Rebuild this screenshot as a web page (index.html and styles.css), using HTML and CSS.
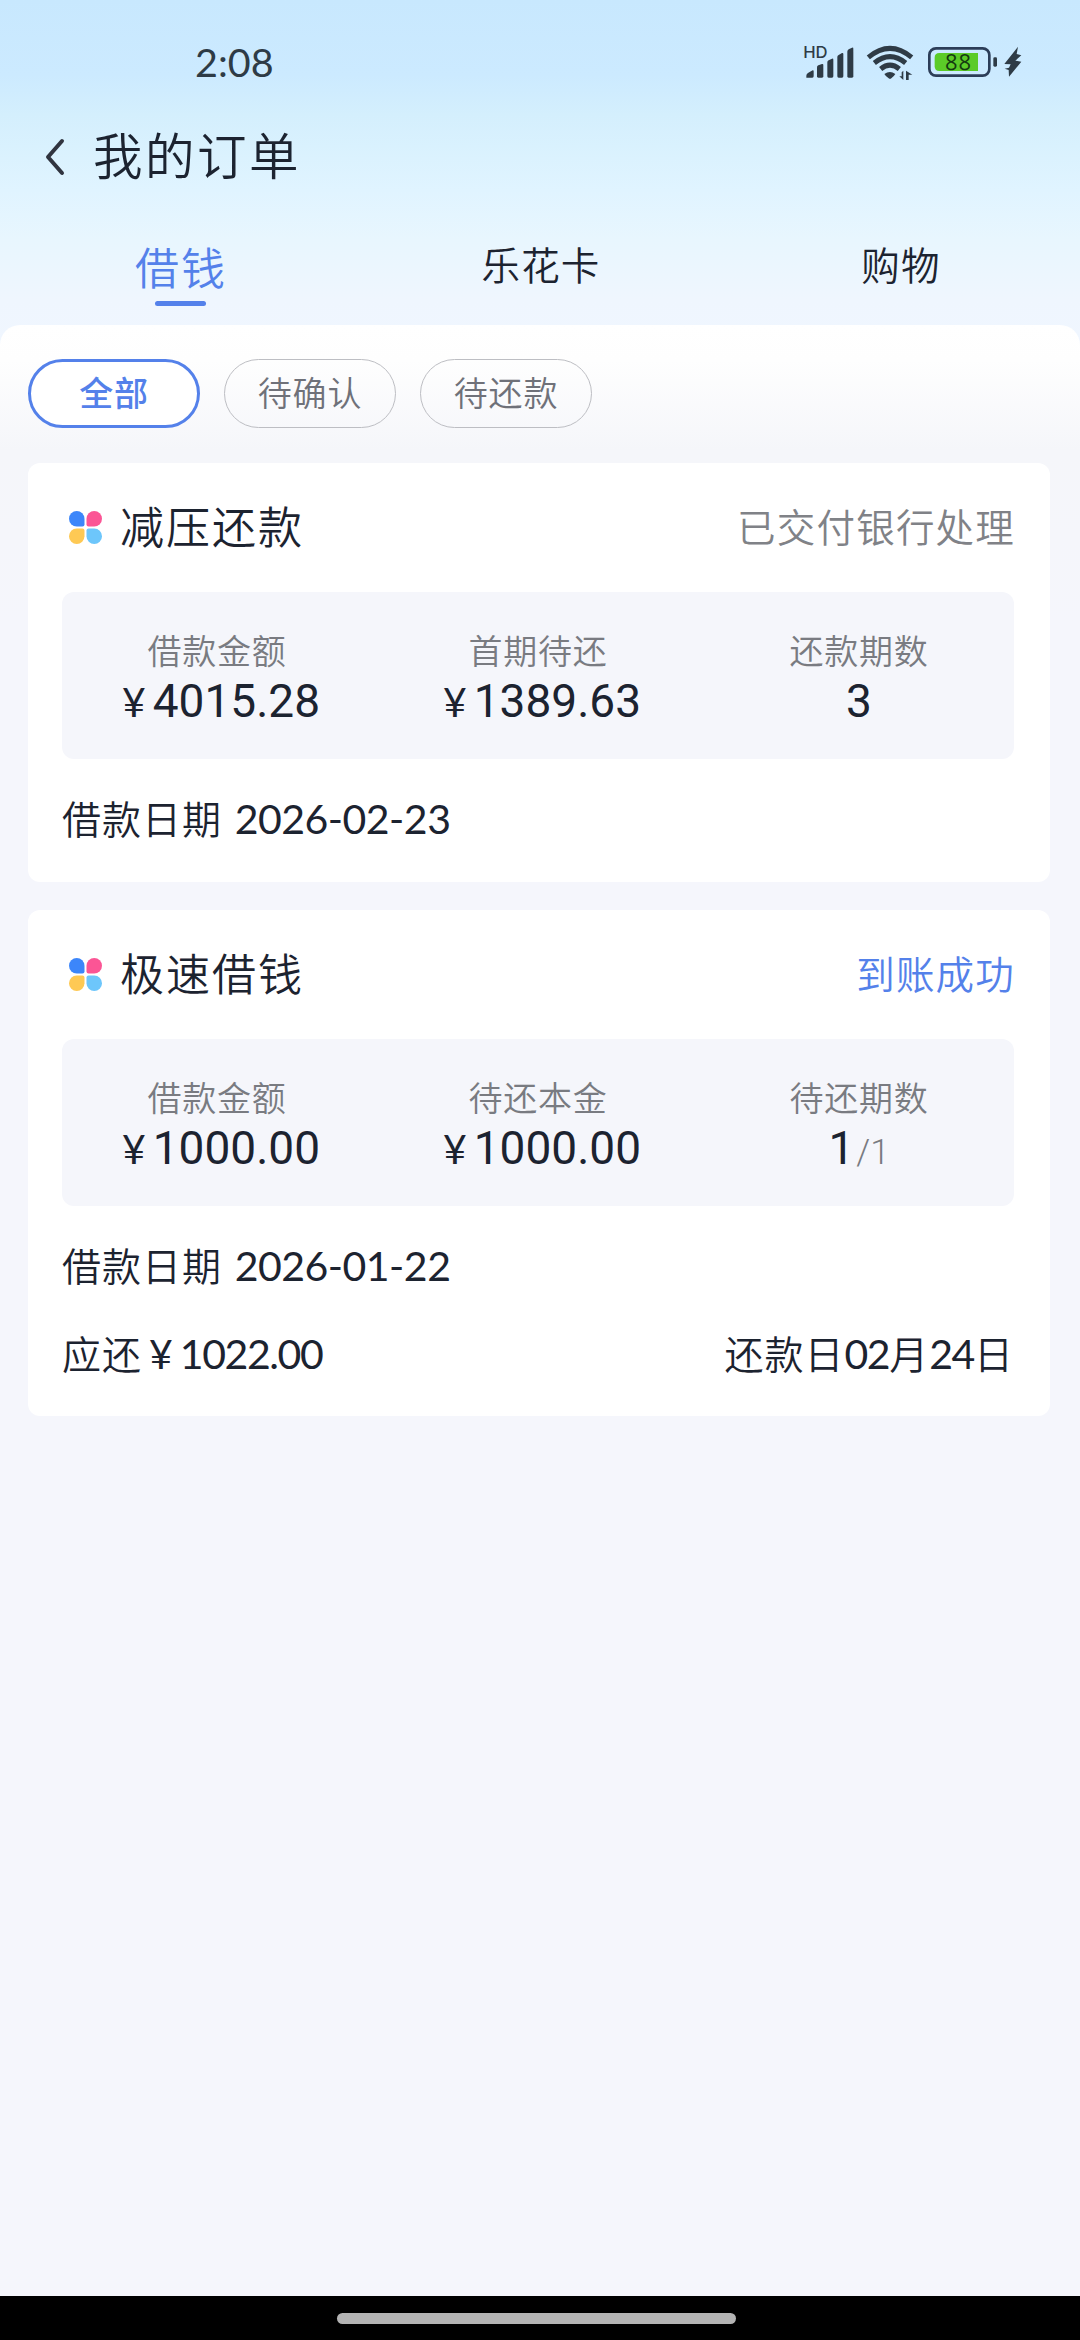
FILE: index.html
```html
<!DOCTYPE html>
<html lang="zh-CN">
<head>
<meta charset="utf-8">
<title>我的订单</title>
<link rel="stylesheet" href="styles.css">
</head>
<body>
<svg class="defs" width="0" height="0" aria-hidden="true">
  <symbol id="clover" viewBox="0 0 98 98">
    <path fill="#3c86fa" d="M23 0A23 23 0 0 1 46 23V40Q46 46 40 46H23A23 23 0 0 1 23 0Z"/>
    <path fill="#fb5595" d="M75 0A23 23 0 0 0 52 23V40Q52 46 58 46H75A23 23 0 0 0 75 0Z"/>
    <path fill="#fec954" d="M23 98A23 23 0 0 0 46 75V58Q46 52 40 52H23A23 23 0 0 0 23 98Z"/>
    <path fill="#6dc6fb" d="M75 98A23 23 0 0 1 52 75V58Q52 52 58 52H75A23 23 0 0 1 75 98Z"/>
  </symbol>
</svg>
<div class="screen">
  <header class="status-bar">
    <time class="clock">2:08</time>
    <svg class="status-icons" viewBox="0 0 780 210">
      <g fill="#2e3b46">
        <text class="hd" x="70" y="84">HD</text>
        <path d="M79 143V137Q79 131 85 128L98 121Q101 120 101 124V139Q101 143 97 143Z"/>
        <path d="M111 139V112Q111 108 115 106L126 102Q130 101 130 105V139Q130 143 126 143H115Q111 143 111 139Z"/>
        <path d="M142 139V97Q142 93 146 91L156 86Q160 85 160 89V139Q160 143 156 143H146Q142 143 142 139Z"/>
        <path d="M172 139V81Q172 77 176 75L186 69Q190 68 190 72V139Q190 143 186 143H176Q172 143 172 139Z"/>
        <path d="M202 139V65Q202 61 206 58L216 53Q220 51 220 56V139Q220 143 216 143H206Q202 143 202 139Z"/>
        <path d="M313 132Q330 120 346 132Q342 139 334 145Q330 148 326 145Q317 139 313 132Z"/>
        <path d="M370 122V150L358 139H365V127ZM378 150V122L397 134H386V150Z"/>
        <rect x="640" y="82" width="11" height="28" rx="4"/>
        <path d="M714 50L673 102L692 103L687 113L674 116L686 120L687 140L724 95L706 92L724 76L710 72Z"/>
      </g>
      <g fill="none" stroke="#2e3b46" stroke-width="15">
        <path d="M265 82Q330 28 395 82"/>
        <path d="M283 99Q330 61 377 99"/>
        <path d="M302 117Q330 94 358 117"/>
      </g>
      <rect x="448" y="55" width="180" height="82" rx="20" fill="none" stroke="#2c3d58" stroke-width="8"/>
      <path fill="#5bcb28" d="M478 69H594V123H478Q464 123 464 109V83Q464 69 478 69Z"/>
      <text class="charge" x="495" y="121">88</text>
    </svg>
  </header>

  <div class="title-bar">
    <svg class="back" viewBox="0 0 20 38"><path d="M17 3L3 19L17 35"/></svg>
    <h1>我的订单</h1>
  </div>

  <nav class="tabs">
    <a class="tab tab-active">借钱</a>
    <a class="tab">乐花卡</a>
    <a class="tab">购物</a>
  </nav>

  <main class="sheet">
    <div class="chips">
      <span class="chip chip-active">全部</span>
      <span class="chip">待确认</span>
      <span class="chip">待还款</span>
    </div>

    <section class="card">
      <div class="card-head">
        <svg class="clover"><use href="#clover"/></svg>
        <h2>减压还款</h2>
        <span class="state">已交付银行处理</span>
      </div>
      <div class="figures">
        <div class="figure"><span class="label">借款金额</span><span class="amount money"><i class="yen">¥</i>4015.28</span></div>
        <div class="figure"><span class="label">首期待还</span><span class="amount money"><i class="yen">¥</i>1389.63</span></div>
        <div class="figure"><span class="label">还款期数</span><span class="amount">3</span></div>
      </div>
      <div class="row"><span>借款日期 <b class="date">2026-02-23</b></span></div>
    </section>

    <section class="card">
      <div class="card-head">
        <svg class="clover"><use href="#clover"/></svg>
        <h2>极速借钱</h2>
        <span class="state state-done">到账成功</span>
      </div>
      <div class="figures">
        <div class="figure"><span class="label">借款金额</span><span class="amount money"><i class="yen">¥</i>1000.00</span></div>
        <div class="figure"><span class="label">待还本金</span><span class="amount money"><i class="yen">¥</i>1000.00</span></div>
        <div class="figure"><span class="label">待还期数</span><span class="amount">1<small>/1</small></span></div>
      </div>
      <div class="row"><span>借款日期 <b class="date">2026-01-22</b></span></div>
      <div class="row row-due"><span>应还<i class="yen">¥</i><b>1022.00</b></span><span>还款日<b>02</b>月<b>24</b>日</span></div>
    </section>
  </main>

  <footer class="gesture-bar"><span class="pill"></span></footer>
</div>
</body>
</html>
```
FILE: styles.css
```css
* { box-sizing: border-box; }
body { margin: 0; font-family: "Noto Sans CJK SC", sans-serif; font-weight: 350; color: #1c2330; }
h1, h2, b, i, small { margin: 0; font-weight: inherit; font-style: normal; }
.defs { display: block; }
.screen {
  width: 1080px; height: 2340px; display: flex; flex-direction: column; overflow: hidden;
  background: linear-gradient(#c8e8fe 0, #cceaff 75px, #d4effd 115px, #e0f4ff 190px, #e8f6fe 240px, #eff6fe 300px, #f0f6ff 350px);
}

.status-bar { height: 110px; display: flex; justify-content: space-between; padding: 30px 40px 0 195px; }
.clock { font: 400 39.5px/64px Lato, sans-serif; color: #2e3b46; }
.status-icons { width: 260px; height: 70px; text-rendering: geometricPrecision; }
.hd { font: 500 50px Inter, sans-serif; letter-spacing: -1px; }
.charge { font: 400 66px "Open Sans", sans-serif; letter-spacing: 3px; fill: #143a10; }

.title-bar { height: 94px; display: flex; align-items: center; padding-left: 45px; }
.back { width: 20px; height: 38px; fill: none; stroke: #30343f; stroke-width: 4; stroke-linecap: round; stroke-linejoin: round; }
.title-bar h1 { margin: -6px 0 0 28px; font-size: 49.5px; line-height: 70px; letter-spacing: 2.5px; }

.tabs { height: 121px; display: grid; grid-template-columns: repeat(3, 1fr); text-align: center; }
.tab { font-size: 38.5px; letter-spacing: 1.2px; line-height: 118px; padding-left: 2px; }
.tab-active {
  display: flex; flex-direction: column; align-items: center;
  font-size: 44px; letter-spacing: 2px; line-height: 96px; padding-top: 14px; color: #5481ea;
}
.tab-active::after { content: ""; width: 51px; height: 5px; margin: -13px 2px 0 0; border-radius: 3px; background: #5481ea; }

.sheet { flex: 1; padding: 34px 30px 0 28px; border-radius: 20px 20px 0 0; background: linear-gradient(#fff 0, #fefefe 35px, #f5f6fa 125px, #f5f6fc 300px); }
.chips { display: flex; gap: 24px; height: 104px; }
.chip {
  width: 172px; height: 69px; border: 1px solid #bdbec3; border-radius: 35px;
  text-align: center; font-size: 34px; line-height: 63px; letter-spacing: .8px; color: #6f7179;
}
.chip-active { border: 3px solid #5481ea; line-height: 59px; font-weight: 500; color: #5481ea; background: #fff; }

.card { width: 1022px; margin-bottom: 28px; padding: 25px 36px 22px 34px; background: #fff; border-radius: 12px; }
.card-head { display: flex; align-items: center; height: 78px; margin-bottom: 26px; }
.clover { width: 33px; height: 33px; margin: 1px 18px 0 7px; }
.card-head h2 { flex: 1; margin-top: -4px; font-size: 44px; line-height: 78px; letter-spacing: 2px; }
.state { margin: -4px -1px 0 0; font-size: 38.5px; letter-spacing: 1.2px; color: #808287; }
.state-done { color: #5481ea; }
.figures { height: 167px; display: grid; grid-template-columns: repeat(3, 321px); justify-content: center; padding-top: 35px; background: #f5f6fb; border-radius: 12px; }
.figure { display: flex; flex-direction: column; align-items: center; }
.label { font-size: 34px; line-height: 46px; letter-spacing: .8px; color: #797b81; }
.amount { font: 400 46px/56px Roboto, sans-serif; }
.money { padding-left: 8px; }
.amount small { font-size: 35px; font-weight: 300; color: #797b81; margin-left: 2px; }
.yen { font: 400 41px/40px Lato, sans-serif; margin-right: 7px; }
.row { display: flex; justify-content: space-between; height: 101px; align-items: center; font-size: 39px; letter-spacing: 1px; line-height: 56px; padding-top: 17px; }
.row b { font-family: Lato, sans-serif; font-weight: 400; font-size: 41px; letter-spacing: -1.4px; }
.row .date { margin-left: 3px; letter-spacing: -.5px; }
.row-due { height: 87px; padding-top: 5px; }
.row-due .yen { margin: 0 6px 0 7px; }

.gesture-bar { height: 44px; background: #000; padding-top: 17px; }
.pill { display: block; width: 399px; height: 11px; margin-left: 337px; border-radius: 6px; background: #b3b3b3; }
```
